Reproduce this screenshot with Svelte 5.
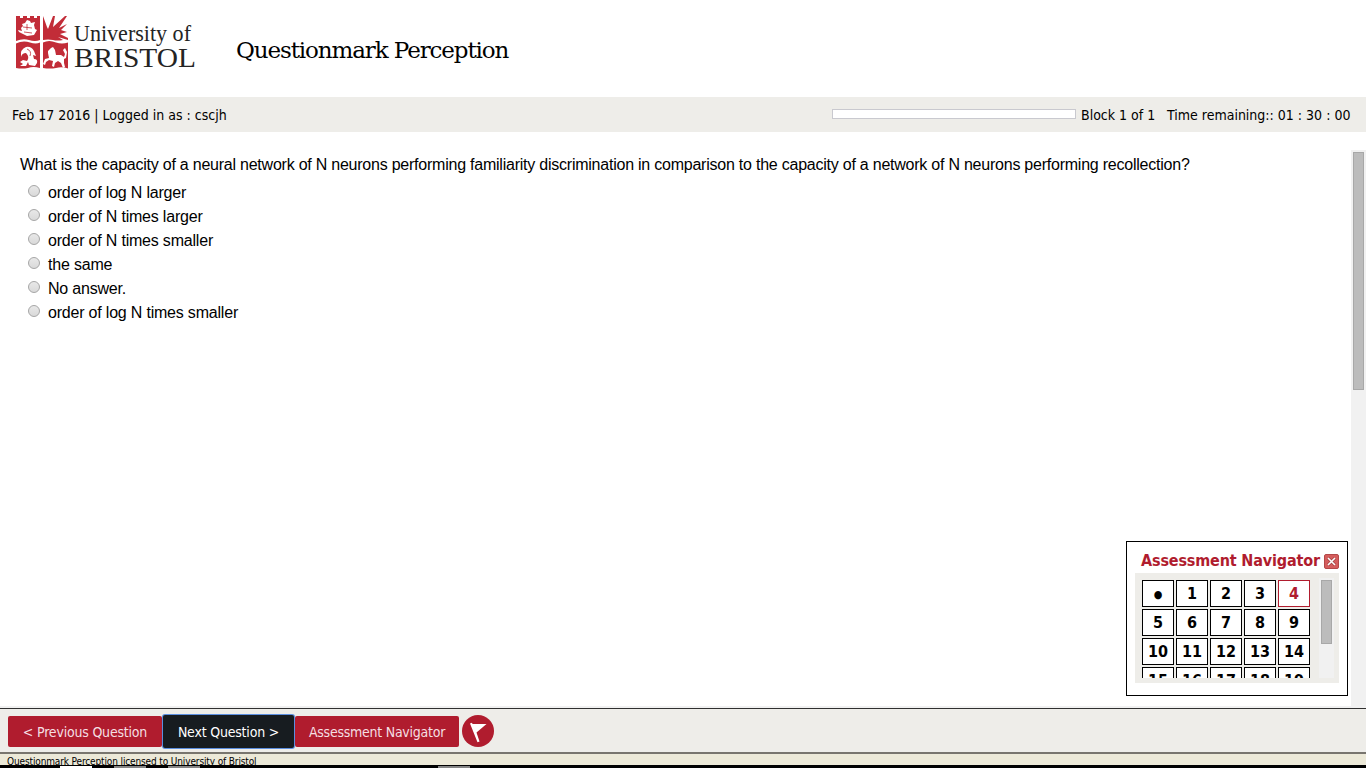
<script>
  const answers = ['order of log N larger', 'order of N times larger', 'order of N times smaller', 'the same', 'No answer.', 'order of log N times smaller'];
  const cells = ['●', ...Array.from({ length: 19 }, (_, i) => String(i + 1))];
</script>

<div class="page">
  <header>
    <svg class="logo" width="200" height="80" viewBox="0 0 200 80" role="img" aria-label="University of Bristol">
      <g fill="#c22c38">
        <path d="M16 16h4v2h3v-2h4v2h3v-2h4v2h3v-2h3v24q-5 2-11 0q-6-2-13 1z" />
        <path d="M43 16l4 11 1 2 5-13h2l-2 11 12-11h2l-8 12 8-4-6 6 6 2-7 2 8 4v2l-10-3 5 3q-6 1-10 0-5-1-10 0z" />
        <path d="M16 43.500q7-3.500 14-1q6 2 10 0v25.500q-7-2-12 0q-6 1-12 0z" />
        <path d="M43 42.500q6-3 13 0q6 2 12 0v26q-6-2-12-.500q-6 1-13 0z" />
      </g>
      <g fill="#fff">
        <path d="M22 24l3-1 2-3 3 1 1 2 4-1-1 3 1 4 2 1-3 5-7 1-8-4-1-2 4 1-1-3 2-2z" />
        <path d="M21 57q-1-8 5-10q5-1 8 4l2 5-3-1 1 4q4 0 3 4l-2 3-6-1-1-3-2 4h-6l3-2-3-2 3-2 4 1q3-4-1-8-4 0-5 4z" />
        <path d="M48 51l3-3 2-1 2 3 1 5 5 0 3 2 1-3-2-4 2-2 2 4-1 6-2 1 0 4 1 4-2 1-2-5-3-2-3 2-1 4-2-1 1-5-4-1-3 2-1 3-2-1 2-5 4-1-1-5z" />
      </g>
      <g stroke="#c22c38" fill="none" stroke-width=".8"><path d="M23 27l9 1M27 24v6M24 32l8 1M27 49q5 2 3 7" /></g>
      <g fill="#242424" font-family="'Liberation Serif', serif">
        <text x="74" y="41" font-size="23" textLength="117" lengthAdjust="spacingAndGlyphs">University of</text>
        <text x="74" y="67" font-size="28" textLength="122" lengthAdjust="spacingAndGlyphs">BRISTOL</text>
      </g>
    </svg>
    <h1>Questionmark Perception</h1>
  </header>
  <div class="status">
    <span class="user">Feb 17 2016 | Logged in as : cscjh</span>
    <span class="progress"></span>
    <span class="block">Block 1 of 1</span>
    <span class="time">Time remaining:: 01 : 30 : 00</span>
  </div>
  <main>
    <section>
      <p>What is the capacity of a neural network of N neurons performing familiarity discrimination in comparison to the capacity of a network of N neurons performing recollection?</p>
      {#each answers as a}
        <label><i class="radio"></i><span>{a}</span></label>
      {/each}
    </section>
    <div class="track"><div class="thumb"></div></div>
  </main>
  <footer>
    <div class="actions">
      <button class="prev">&lt; Previous Question</button>
      <button class="next">Next Question &gt;</button>
      <button class="nav">Assessment Navigator</button>
      <svg width="32" height="32" viewBox="0 0 32 32"><circle cx="16" cy="16" r="16" fill="#b01c2e" /><path d="M8 8.500l2-.8.500 1.300H24.500L14.500 17.500 17.500 26.500l-2 .8z" fill="#fff" /></svg>
    </div>
    <div class="license">Questionmark Perception licensed to University of Bristol</div>
    <div class="edge"><b></b><i></i><i></i><em></em></div>
  </footer>
  <aside>
    <div class="title"><span>Assessment Navigator</span>
      <svg width="15" height="15" viewBox="0 0 15 15"><rect x=".5" y=".5" width="14" height="14" rx="1.500" fill="#d45c5c" stroke="#b44848" /><path d="M4 4l7 7M11 4l-7 7" stroke="#a04040" stroke-width="3" /><path d="M4 4l7 7M11 4l-7 7" stroke="#fff" stroke-width="1.600" /></svg>
    </div>
    <div class="panel">
      <div class="grid">{#each cells as c}<span class:current={c === '4'} class:dot={c === '●'}>{c}</span>{/each}</div>
      <div class="minitrack"><div></div></div>
    </div>
  </aside>
</div>

<style>
  :global(body) { margin: 0; overflow: hidden; }
  .page { position: relative; width: 1366px; height: 768px; display: flex; flex-direction: column; background: #fff; color: #000; overflow: hidden; font-family: 'DejaVu Sans Condensed', 'DejaVu Sans', sans-serif; font-stretch: condensed; }
  header { height: 97px; display: flex; flex: none; }
  h1 { margin: 34px 0 0 36px; font: 23px/32px 'DejaVu Serif', serif; letter-spacing: -1.1px; white-space: nowrap; }
  .status { height: 35px; flex: none; background: #eeede9; display: flex; align-items: center; padding: 0 0 0 12px; font-size: 14px; white-space: nowrap; box-sizing: border-box; }
  .user { width: 820px; }
  .progress { width: 242px; height: 8px; border: 1px solid #c9c9cf; background: #fff; margin-right: 5px; margin-top: -1px; }
  .block { width: 86px; }
  main { flex: 1; display: flex; padding-top: 18px; background: linear-gradient(#f1f1f1, #f1f1f1) bottom / 100% 2px no-repeat; }
  section { flex: 1; padding: 5px 0 0 20px; font: 16px/24px 'Liberation Sans', Arial, sans-serif; letter-spacing: -.232px; }
  p { margin: 0 0 2px; line-height: 20px; white-space: nowrap; height: 20px; }
  label { display: flex; height: 24px; padding-left: 8px; letter-spacing: -.2px; }
  label span { padding-top: 4px; line-height: 24px; height: 20px; }
  .radio { width: 10px; height: 10px; margin: 8px 8px 0 0; border: 1px solid #a6a6a6; border-radius: 50%; background: linear-gradient(#e8e8e8, #d9d9d9); }
  .track { width: 15px; margin-bottom: 2px; background: #f1f1f1; box-sizing: border-box; padding: 2px; }
  .thumb { width: 11px; height: 238px; background: #bcbcbc; border: 1px solid #a8a8a8; box-sizing: border-box; }
  footer { height: 60px; flex: none; }
  .actions { height: 43px; background: #eeede9; border-top: 1px solid #303030; display: flex; align-items: center; padding-left: 8px; }
  button { height: 31px; margin: 2px 0 0; padding: 1px 0 0; border: 0; border-radius: 2px; background: #b01c2e; color: #f5dfe2; font: 14px 'DejaVu Sans Condensed', 'DejaVu Sans', sans-serif; font-stretch: condensed; letter-spacing: -.2px; white-space: nowrap; }
  .prev { width: 154px; }
  .next { width: 131px; height: 33px; background: #171c20; color: #fff; box-shadow: 0 0 0 1px #5c8fe0; margin: 2px 1px 0; z-index: 1; }
  .nav { width: 164px; margin-right: 3px; letter-spacing: -.25px; }
  .license { height: 11px; padding-left: 7px; border-top: 2px solid #78756e; background: #ece9d8; font-size: 10px; letter-spacing: -.13px; line-height: 15px; overflow: hidden; white-space: nowrap; }
  .edge { height: 3px; background: #000; display: flex; align-items: flex-start; }
  .edge b, .edge i, .edge em { height: 2px; width: 32px; background: #858585; margin-left: 22px; margin-top: 1px; }
  .edge b { background: #fff; margin-left: 60px; }
  .edge em { margin-left: 238px; }
  aside { position: absolute; left: 1126px; top: 541px; width: 222px; height: 155px; border: 1px solid #000; background: #fff; box-sizing: border-box; padding: 8px; }
  .title { height: 23px; display: flex; align-items: center; padding-left: 6px; color: #b01c2e; font-size: 16px; font-weight: bold; letter-spacing: -.16px; white-space: nowrap; }
  .title span { width: 183px; flex: none; padding-bottom: 2px; }
  .panel { height: 110px; background: #eeede9; display: flex; box-sizing: border-box; padding: 5px; width: 204px; }
  .grid { display: grid; grid-template-columns: repeat(5, 32px); grid-auto-rows: 27px; gap: 2px; padding: 2px 11px 0 2px; height: 98px; overflow: hidden; }
  .grid span { border: 1px solid #000; box-sizing: border-box; background: #fff; font-size: 16px; font-weight: bold; line-height: 26px; text-align: center; }
  .grid span.current { border-color: #b01c2e; color: #b01c2e; }
  .grid span.dot { font-size: 11px; line-height: 27px; }
  .minitrack { width: 15px; height: 100px; background: #f1f1f1; box-sizing: border-box; padding: 2px 0 0 2px; flex: none; }
  .minitrack div { width: 11px; height: 64px; background: #bcbcbc; border: 1px solid #a8a8a8; box-sizing: border-box; }
</style>
